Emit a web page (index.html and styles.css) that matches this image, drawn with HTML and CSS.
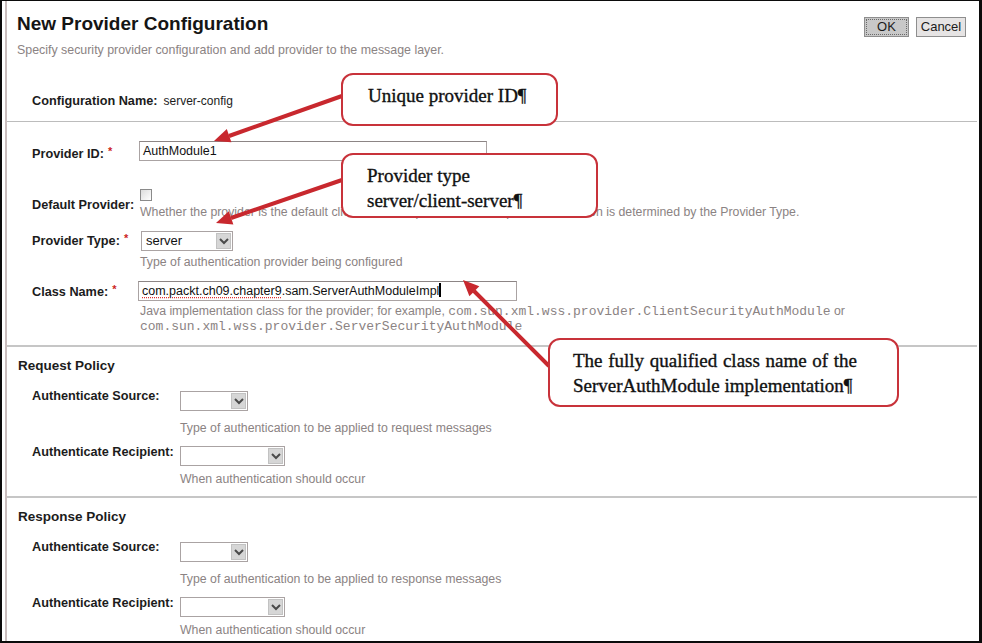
FILE: index.html
```html
<!DOCTYPE html>
<html lang="en">
<head>
<meta charset="utf-8">
<title>New Provider Configuration</title>
<link rel="stylesheet" href="styles.css">
</head>
<body>
<div class="frame">
  <div class="page">
    <header class="head">
      <div class="titles">
        <h1 class="title">New Provider Configuration</h1>
        <p class="subtitle">Specify security provider configuration and add provider to the message layer.</p>
      </div>
      <div class="actions">
        <button class="btn btn-primary">OK</button>
        <button class="btn btn-cancel">Cancel</button>
      </div>
    </header>

    <div class="confname"><span class="lbl-b">Configuration Name:</span><span class="confval">server-config</span></div>

    <section class="props">
      <div class="row r-id">
        <div class="lbl">Provider ID:<span class="req">*</span></div>
        <div class="fld"><div class="input w-id">AuthModule1</div></div>
      </div>
      <div class="row r-def">
        <div class="lbl">Default Provider:</div>
        <div class="fld">
          <div class="check"></div>
          <div class="help help-gap4">Whether the provider is the default client or server provider; the scope of this function is determined by the Provider Type.</div>
        </div>
      </div>
      <div class="row r-type">
        <div class="lbl">Provider Type:<span class="req">*</span></div>
        <div class="fld">
          <div class="select w-type"><span class="sval">server</span><span class="sbtn"><svg width="12" height="10" viewBox="0 0 12 10"><polyline points="2,3 6,7 10,3" fill="none" stroke="#4a4a4a" stroke-width="2"/></svg></span></div>
          <div class="help help-gap4">Type of authentication provider being configured</div>
        </div>
      </div>
      <div class="row r-class">
        <div class="lbl">Class Name:<span class="req">*</span></div>
        <div class="fld">
          <div class="input w-class"><span class="spell">com.packt.ch09.chapter9</span>.sam.ServerAuthModuleImpl<span class="caret"></span></div>
          <div class="help help-gap3">Java implementation class for the provider; for example, <span class="mono">com.sun.xml.wss.provider.ClientSecurityAuthModule</span> or <span class="mono">com.sun.xml.wss.provider.ServerSecurityAuthModule</span></div>
        </div>
      </div>
    </section>

    <section class="policy">
      <h2 class="ptitle">Request Policy</h2>
      <div class="prow prow-src">
        <div class="lbl">Authenticate Source:</div>
        <div class="fld">
          <div class="select w-src sel-src"><span class="sval"></span><span class="sbtn"><svg width="12" height="10" viewBox="0 0 12 10"><polyline points="2,3 6,7 10,3" fill="none" stroke="#4a4a4a" stroke-width="2"/></svg></span></div>
          <div class="help phelp-src">Type of authentication to be applied to request messages</div>
        </div>
      </div>
      <div class="prow prow-rcp">
        <div class="lbl">Authenticate Recipient:</div>
        <div class="fld">
          <div class="select w-rcp sel-rcp"><span class="sval"></span><span class="sbtn"><svg width="12" height="10" viewBox="0 0 12 10"><polyline points="2,3 6,7 10,3" fill="none" stroke="#4a4a4a" stroke-width="2"/></svg></span></div>
          <div class="help phelp-rcp">When authentication should occur</div>
        </div>
      </div>
    </section>

    <section class="policy">
      <h2 class="ptitle">Response Policy</h2>
      <div class="prow prow-src">
        <div class="lbl">Authenticate Source:</div>
        <div class="fld">
          <div class="select w-src sel-src"><span class="sval"></span><span class="sbtn"><svg width="12" height="10" viewBox="0 0 12 10"><polyline points="2,3 6,7 10,3" fill="none" stroke="#4a4a4a" stroke-width="2"/></svg></span></div>
          <div class="help phelp-src">Type of authentication to be applied to response messages</div>
        </div>
      </div>
      <div class="prow prow-rcp">
        <div class="lbl">Authenticate Recipient:</div>
        <div class="fld">
          <div class="select w-rcp sel-rcp"><span class="sval"></span><span class="sbtn"><svg width="12" height="10" viewBox="0 0 12 10"><polyline points="2,3 6,7 10,3" fill="none" stroke="#4a4a4a" stroke-width="2"/></svg></span></div>
          <div class="help phelp-rcp">When authentication should occur</div>
        </div>
      </div>
    </section>
  </div>

  <svg class="arrows" width="982" height="643" viewBox="0 0 982 643">
    <g stroke="#c8282e" stroke-width="4" fill="none">
      <line x1="342" y1="96" x2="229" y2="136"/>
      <line x1="342" y1="180" x2="231" y2="218"/>
      <line x1="549" y1="366" x2="474" y2="291"/>
    </g>
    <g fill="#c8282e">
      <polygon points="214,141 231.4,142.3 226.8,129.1"/>
      <polygon points="216,223 233.4,224.4 228.8,211.2"/>
      <polygon points="463,280 479.3,286.3 469.4,296.3"/>
    </g>
  </svg>

  <div class="callout c1">Unique provider ID¶</div>
  <div class="callout c2">Provider type<br>server/client-server¶</div>
  <div class="callout c3">The fully qualified class name of the ServerAuthModule implementation¶</div>
</div>
</body>
</html>
```

FILE: styles.css
```css
html, body {
  margin: 0;
  padding: 0;
  background: #fff;
}

.frame {
  position: relative;
  width: 982px;
  height: 643px;
  box-sizing: border-box;
  border-style: solid;
  border-color: #0b0b0b;
  border-width: 1px 3px 2px 2px;
  background: #fff;
  overflow: hidden;
  font-family: "Liberation Sans", Arial, sans-serif;
  color: #1c1c1c;
}

.page {
  margin: 0 2px 0 3px;
  border-left: 2px solid #c9bdbd;
  height: 100%;
  box-sizing: border-box;
}

/* header */
.head {
  display: flex;
  justify-content: space-between;
  align-items: flex-start;
  padding: 12px 11px 0 10px;
}

.title {
  margin: 0;
  font-size: 19px;
  line-height: 22px;
  font-weight: bold;
  color: #151515;
}

.subtitle {
  margin: 8px 0 0;
  font-size: 12.4px;
  line-height: 15px;
  color: #8b8383;
}

.actions {
  display: flex;
  gap: 7px;
  margin-top: 4px;
}

.btn {
  height: 20px;
  box-sizing: border-box;
  padding: 0;
  font-family: "Liberation Sans", Arial, sans-serif;
  font-size: 13px;
  line-height: 18px;
  color: #1c1c1c;
  border: 1px solid #8e8e8e;
  background: #e6e4e4;
}

.btn-primary {
  width: 45px;
  background: #c8c8c8;
  outline: 1px dotted #6a6a6a;
  outline-offset: -3px;
}

.btn-cancel {
  width: 50px;
}

/* configuration name */
.confname {
  margin-top: 36px;
  padding-left: 25px;
  font-size: 12.7px;
  line-height: 15px;
}

.lbl-b {
  font-weight: bold;
}

.confval {
  margin-left: 6px;
  font-size: 12px;
}

/* properties */
.props {
  margin-top: 12px;
  border-top: 1px solid #bcbcbc;
  padding: 0 0 11px 25px;
}

.row {
  display: grid;
  grid-template-columns: 106px 1fr;
  align-items: start;
}

.lbl {
  font-size: 12.7px;
  line-height: 15px;
  font-weight: bold;
  color: #1c1c1c;
  white-space: nowrap;
}

.req {
  color: #cc1f1f;
  font-size: 11px;
  margin-left: 4px;
  vertical-align: 3px;
  font-weight: bold;
}

.r-id { margin-top: 19px; }
.r-id .lbl { padding-top: 3px; }

.r-def { margin-top: 27px; }
.r-def .lbl { padding-top: 9px; }

.r-type { margin-top: 11px; }
.r-type .lbl { padding-top: 0; }

.r-class { margin-top: 11px; }
.r-class .lbl { padding-top: 1px; }

.input {
  height: 20px;
  box-sizing: border-box;
  border: 1px solid #aaa3a3;
  border-top-color: #8c8585;
  padding: 0 3px;
  font-size: 12.5px;
  line-height: 18px;
  color: #111;
  background: #fff;
  white-space: nowrap;
  overflow: hidden;
}

.w-id {
  width: 348px;
  margin-left: 1px;
}

.w-class {
  width: 379px;
}

.spell {
  text-decoration: underline dotted #d33;
  text-underline-offset: 2px;
}

.caret {
  display: inline-block;
  width: 2px;
  height: 14px;
  background: #000;
  vertical-align: -2px;
}

.check {
  width: 12px;
  height: 12px;
  box-sizing: border-box;
  margin-left: 2px;
  border: 1px solid #8a8a8a;
  background: linear-gradient(135deg, #dcdcdc, #fff);
}

.help {
  font-size: 12.3px;
  line-height: 15px;
  color: #8b8383;
  padding-left: 2px;
}

.help-gap4 { margin-top: 4px; }
.help-gap3 { margin-top: 3px; }

.mono {
  font-family: "Liberation Mono", "Courier New", monospace;
  font-size: 13px;
  line-height: 10px;
}

/* select */
.select {
  display: flex;
  height: 20px;
  box-sizing: border-box;
  border: 1px solid #aaa3a3;
  background: #fff;
}

.sval {
  flex: 1;
  padding-left: 4px;
  font-size: 13px;
  line-height: 18px;
  color: #111;
}

.sbtn {
  width: 15px;
  margin: 1px;
  background: #d6d6d6;
  border: 1px solid #c2c2c2;
  box-sizing: border-box;
  display: flex;
  align-items: center;
  justify-content: center;
}

.w-type {
  width: 92px;
  margin-left: 3px;
}

.w-src { width: 68px; }
.w-rcp { width: 105px; }

/* policy sections */
.policy {
  border-top: 2px solid #c6c6c6;
  padding-bottom: 9px;
}

.ptitle {
  margin: 11px 0 0;
  padding-left: 11px;
  font-size: 13.5px;
  line-height: 15px;
  font-weight: bold;
  color: #1c1c1c;
}

.prow {
  display: grid;
  grid-template-columns: 148px 1fr;
  align-items: start;
  padding-left: 25px;
}

.prow-src { margin-top: 16px; }
.prow-rcp { margin-top: 9px; }

.sel-src { margin-top: 2px; }
.sel-rcp { margin-top: 1px; }

.prow .help { padding-left: 0; }
.phelp-src { margin-top: 10px; }
.phelp-rcp { margin-top: 6px; }

/* annotation overlay */
.arrows {
  position: absolute;
  left: -2px;
  top: -1px;
  pointer-events: none;
}

.callout {
  position: absolute;
  box-sizing: border-box;
  border: 2px solid #c8323a;
  border-radius: 12px;
  background: #fff;
  font-family: "Liberation Serif", "Times New Roman", serif;
  font-size: 19px;
  line-height: 25px;
  color: #111;
  -webkit-text-stroke: 0.35px #111;
  padding: 8px 0 0 25px;
}

.c1 {
  left: 339px;
  top: 72px;
  width: 217px;
  height: 53px;
}

.c2 {
  left: 339px;
  top: 152px;
  width: 257px;
  height: 65px;
  padding-left: 24px;
}

.c3 {
  left: 546px;
  top: 337px;
  width: 351px;
  height: 69px;
  padding-left: 23px;
  padding-right: 40px;
  text-align: justify;
}
```
